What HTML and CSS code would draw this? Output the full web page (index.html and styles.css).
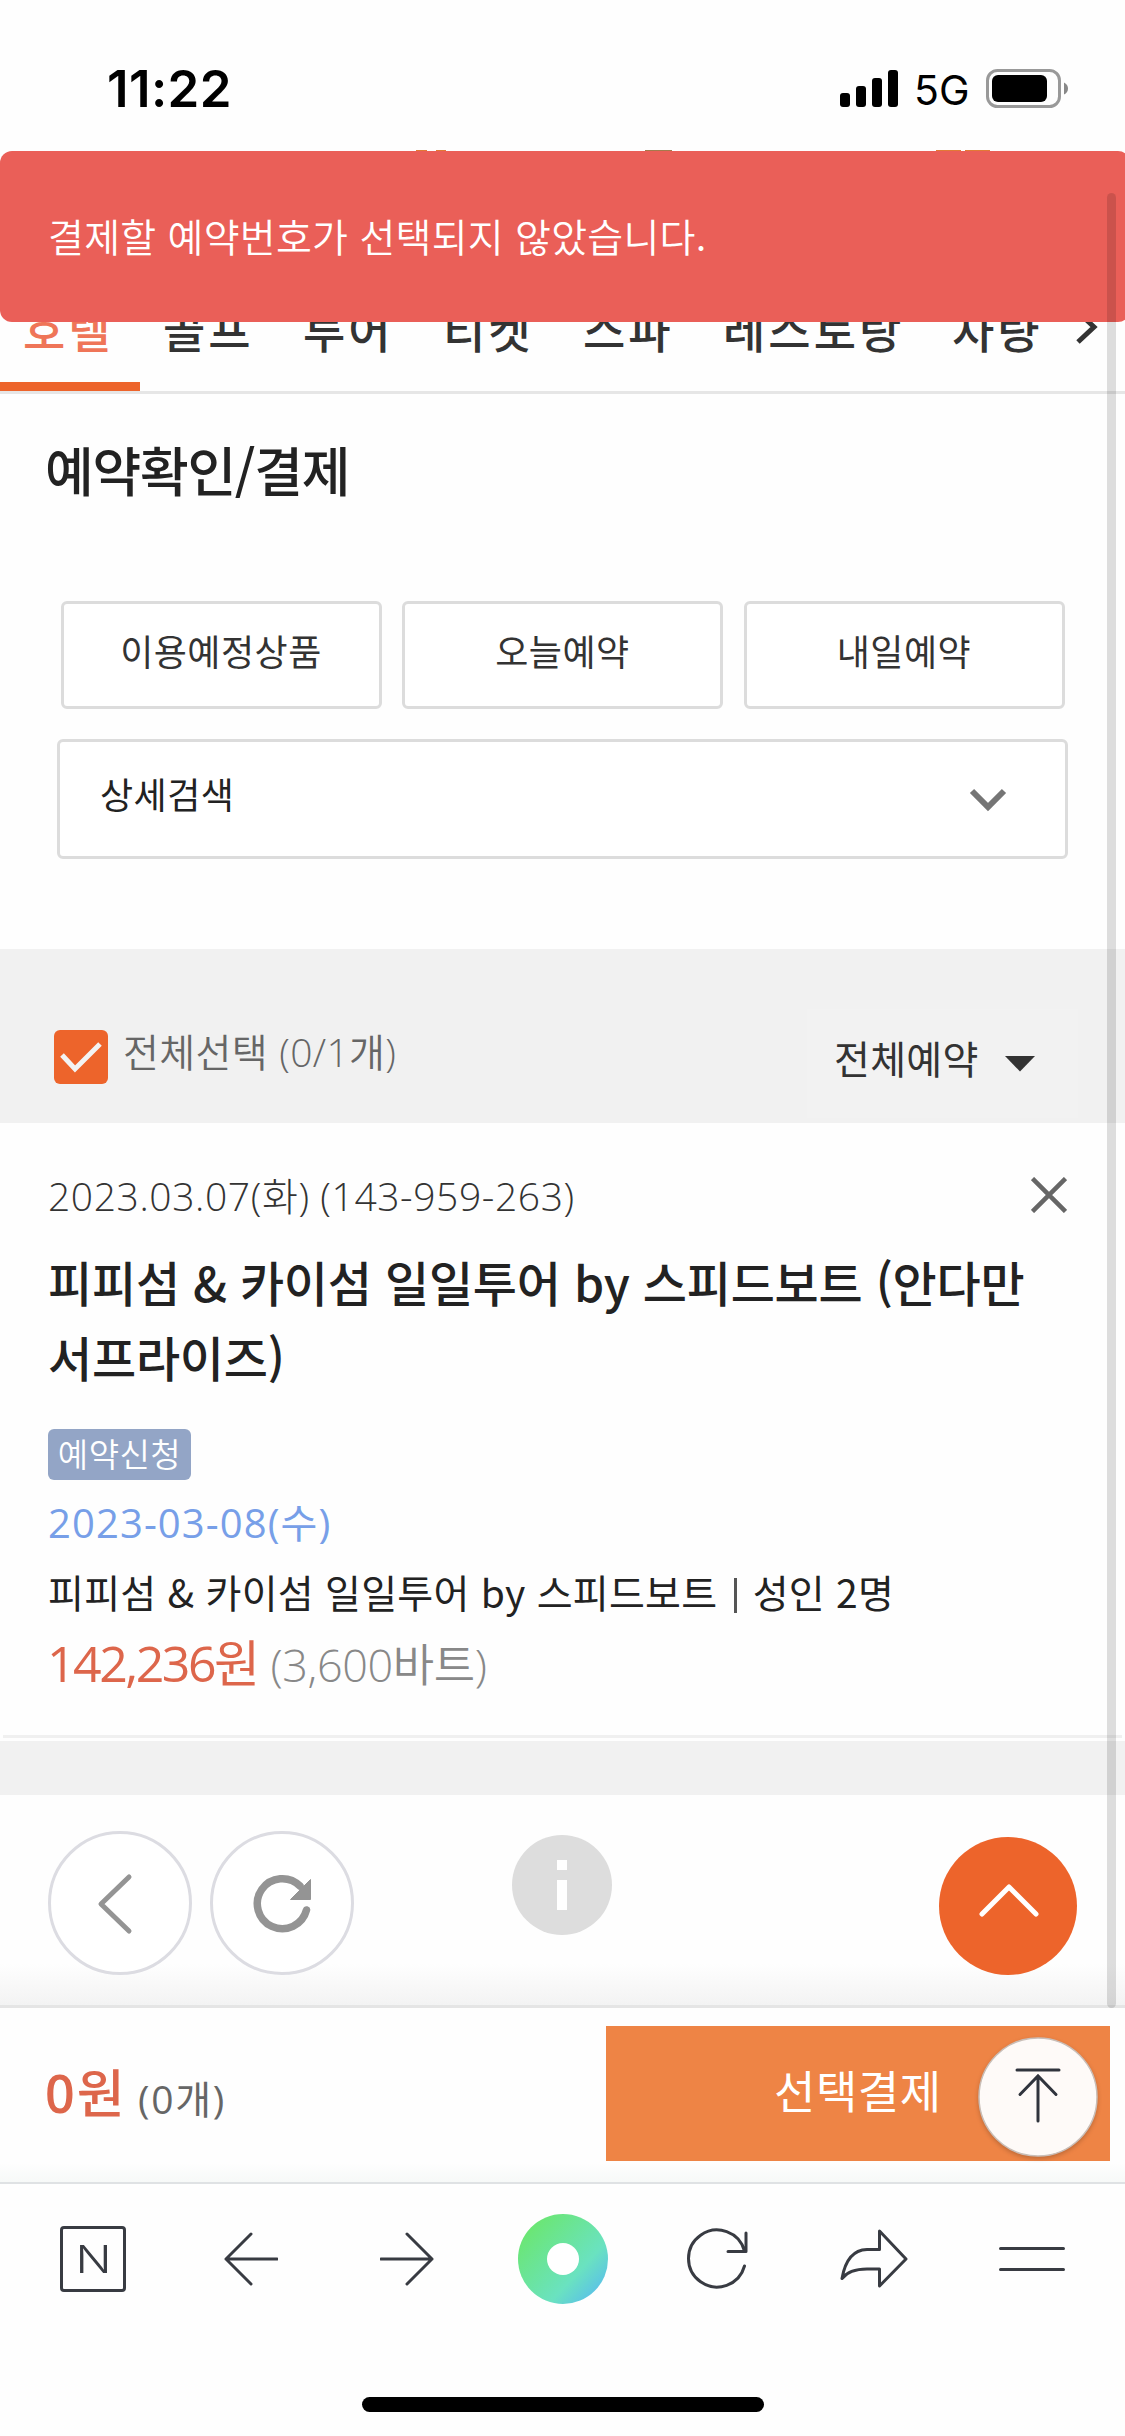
FILE: index.html
```html
<!DOCTYPE html>
<html lang="ko">
<head>
<meta charset="utf-8">
<title>예약확인/결제</title>
<link rel="stylesheet" href="styles.css">
</head>
<body>
<div class="screen">
  <header class="status">
    <span class="time">11:22</span>
    <div class="status-right">
      <svg width="58" height="38" viewBox="0 0 58 38"><rect x="0" y="23" width="10" height="14" rx="3"/><rect x="16" y="16" width="10" height="21" rx="3"/><rect x="32" y="8" width="10" height="29" rx="3"/><rect x="48" y="0" width="10" height="37" rx="3"/></svg>
      <span class="net">5G</span>
      <svg width="83" height="40" viewBox="0 0 83 40"><rect x="1.5" y="1.5" width="72" height="36" rx="10" fill="none" stroke="#999" stroke-width="3"/><rect x="6" y="6" width="55" height="27" rx="6"/><path d="M78 13.500q4 2 4 6t-4 6z" fill="#888"/></svg>
    </div>
    <i class="peek peek-a"></i><i class="peek peek-b"></i><i class="peek peek-c"></i><i class="peek peek-d"></i><i class="peek peek-e"></i>
  </header>

  <div class="top">
    <div class="toast" role="alert"><span class="t-toast">결제할 예약번호가 선택되지 않았습니다.</span></div>
    <nav class="tabs">
      <a class="tab active">호텔</a><a class="tab">골프</a><a class="tab">투어</a><a class="tab">티켓</a><a class="tab">스파</a><a class="tab wide">레스토랑</a><a class="tab last">차량</a>
      <svg class="tabs-next" width="24" height="34" viewBox="0 0 24 34"><path d="M3 2l16 15L3 32" fill="none" stroke="#333" stroke-width="5"/></svg>
    </nav>
  </div>

  <main>
    <h1 class="heading">예약확인/결제</h1>
    <div class="quick">
      <button class="quick-btn">이용예정상품</button>
      <button class="quick-btn">오늘예약</button>
      <button class="quick-btn">내일예약</button>
    </div>
    <div class="detail-search">
      <span>상세검색</span>
      <svg width="38" height="24" viewBox="0 0 38 24"><path d="M3 3l16 16L35 3" fill="none" stroke="#757575" stroke-width="6"/></svg>
    </div>

    <section class="filter">
      <span class="check"><svg width="54" height="54" viewBox="0 0 54 54"><path d="M8 25l13 14L46 14" fill="none" stroke="#f3f3f3" stroke-width="5"/></svg></span>
      <span class="select-all">전체선택 <span class="lat">(0/1</span>개<span class="lat">)</span></span>
      <div class="kind"><span>전체예약</span><svg width="30" height="16" viewBox="0 0 30 16"><path d="M0 0h30L15 15.500z" fill="#333"/></svg></div>
    </section>

    <article class="booking">
      <div class="book-top">
        <span class="book-no"><span class="lat">2023.03.07(</span>화<span class="lat">)&nbsp;(143-959-263)</span></span>
        <svg width="36" height="36" viewBox="0 0 36 36"><path d="M1.500 1.500l33 33M34.500 1.500l-33 33" stroke="#666" stroke-width="4.500"/></svg>
      </div>
      <h2 class="book-title">피피섬 &amp; 카이섬 일일투어 by 스피드보트 (안다만<br>서프라이즈)</h2>
      <span class="badge">예약신청</span>
      <p class="book-date"><span class="lat">2023-03-08(</span>수<span class="lat">)</span></p>
      <p class="book-item">피피섬 &amp; 카이섬 일일투어 by 스피드보트 <i class="bar"></i> 성인 2명</p>
      <p class="book-price"><span class="won"><span class="lat">142,236</span>원</span><span class="baht"><span class="lat">(3,600</span>바트<span class="lat">)</span></span></p>
    </article>
    <div class="rule"></div>
    <div class="band"></div>

    <div class="floating">
      <button class="round"><svg width="144" height="144" viewBox="0 0 144 144"><path d="M81 46L53 73l28 27" fill="none" stroke="#949494" stroke-width="5" stroke-linecap="round" stroke-linejoin="round"/></svg></button>
      <button class="round second"><svg width="144" height="144" viewBox="0 0 144 144"><path d="M96.500 79A25 25 0 1 1 90 55" fill="none" stroke="#949494" stroke-width="7.500" stroke-linecap="round"/><path d="M100.500 48.500v20H80.500z" fill="#949494" stroke="#949494" stroke-linejoin="round"/></svg></button>
      <svg class="info" width="100" height="100" viewBox="0 0 100 100"><circle cx="50" cy="50" r="50" fill="#ddd"/><path d="M45 25h10v10H45zM45 45h10v30H45z" fill="#fff"/></svg>
      <svg class="to-top" width="138" height="138" viewBox="0 0 138 138"><circle cx="69" cy="69" r="69" fill="#ed642b"/><path d="M43 77l27-27 27 27" fill="none" stroke="#fff" stroke-width="5" stroke-linecap="round" stroke-linejoin="round"/></svg>
    </div>
  </main>

  <footer class="pay">
    <span class="sum"><span class="lat">0</span>원</span><span class="count"><span class="lat">(0</span>개<span class="lat">)</span></span>
    <button class="pay-btn"><span>선택결제</span>
      <svg class="jump" width="120" height="120" viewBox="0 0 120 120"><circle cx="60" cy="60" r="59" fill="#fefaf8" stroke="#c9beb8" stroke-width="1.500"/><path d="M39 33h42M60 84V39M42 57.500L60 39l18 18.500" fill="none" stroke="#30343d" stroke-width="3" stroke-linecap="round"/></svg>
    </button>
  </footer>

  <nav class="browser">
    <span class="naver"><span>N</span></span>
    <svg class="i-back" width="54" height="54" viewBox="0 0 54 54"><path d="M27 2L2 27l25 25M2 27h51" /></svg>
    <svg class="i-fwd" width="54" height="54" viewBox="0 0 54 54"><path d="M27 2l25 25-25 25M52 27H1"/></svg>
    <svg class="i-home" width="90" height="90" viewBox="0 0 90 90"><defs><linearGradient id="g" x1=".15" y1=".15" x2=".9" y2=".85"><stop offset="0" stop-color="#6be675"/><stop offset=".7" stop-color="#6ae2c0"/><stop offset="1" stop-color="#5bc3e6"/></linearGradient></defs><circle cx="45" cy="45" r="45" fill="url(#g)"/><circle cx="45" cy="45" r="16" fill="#fff"/></svg>
    <svg class="i-reload" width="64" height="64" viewBox="0 0 64 64"><path d="M58.500 39A28.500 28.500 0 1 1 58.500 24M60 6v18.500H42"/></svg>
    <svg class="i-share" width="68" height="62" viewBox="0 0 68 62"><path d="M39.500 3L66 31 39.500 58V41H27Q9 41 2 50.500 7 22 27 21.500h12.500z"/></svg>
    <svg class="i-menu" width="66" height="26" viewBox="0 0 66 26"><path d="M1.500 2.500h63M1.500 23.500h63"/></svg>
  </nav>
  <div class="home-indicator"></div>
  <div class="scrollbar"></div>
</div>
</body>
</html>
```
FILE: styles.css
```css
* { box-sizing: border-box; margin: 0; padding: 0; }
body { width: 1125px; background: #fff; }
svg { display: block; flex: none; }
button { font: inherit; color: inherit; border: 0; background: none; }
.screen {
  position: relative; width: 1125px; height: 2436px; overflow: hidden;
  display: flex; flex-direction: column; background: #fefefe; color: #222;
  font-family: "Noto Sans CJK KR", sans-serif; font-size: 39px; line-height: 1; white-space: nowrap;
}
.lat { font-family: "Open Sans", "Noto Sans CJK KR", sans-serif; }

.status { position: relative; height: 151px; flex: none; display: flex; justify-content: space-between; padding: 0 56px 0 107px; font-family: Inter, sans-serif; color: #000; }
.time { font-size: 51px; font-weight: 600; line-height: 60px; padding-top: 59px; letter-spacing: .400px; }
.status-right { display: flex; align-items: flex-start; padding-top: 70px; }
.net { font-size: 41px; line-height: 50px; margin: -5px 18px 0 16px; width: 54px; }
.status-right svg:last-child { margin-top: -1px; }
.peek { position: absolute; top: 150px; height: 2px; background: #e27a35; }
.peek-a { left: 416px; width: 11px; } .peek-b { left: 436px; width: 10px; }
.peek-c { left: 645px; width: 27px; background: #a57a4c; }
.peek-d { left: 936px; width: 25px; } .peek-e { left: 965px; width: 25px; }

.top { position: relative; height: 243px; flex: none; }
.toast { position: absolute; inset: 0 -5px auto 0; height: 171px; z-index: 1; border-radius: 12px; background: #ea5f58; color: #fff; display: flex; align-items: center; padding: 0 0 3px 48px; font-weight: 350; letter-spacing: .25px; }
.tabs { height: 243px; border-bottom: 3px solid #e6e6e6; display: flex; align-items: flex-end; font-size: 46px; font-weight: 500; letter-spacing: 3px; color: #333; }
.tab { width: 140px; height: 94px; padding-left: 23px; line-height: 62px; border-bottom: 9px solid transparent; flex: none; }
.tab.active { color: #ef7558; border-color: #ed642b; }
.tab.wide { width: 230px; }
.tab.last { width: 145px; padding-left: 22px; }
.tabs-next { margin-bottom: 47px; }

main { height: 1611px; flex: none; background: linear-gradient(#fefefe 1570px, #f3f3f3 1611px); display: flex; flex-direction: column; }
.heading { font-size: 53px; font-weight: 500; line-height: 80px; letter-spacing: -1.300px; padding: 35px 0 0 45px; height: 207px; }
.quick { display: grid; grid-template-columns: repeat(3, 321px); gap: 20.500px; padding-left: 60.500px; }
.quick-btn { height: 108px; border: 3px solid #dcdcdc; border-radius: 6px; font-size: 36px; letter-spacing: .500px; color: #333; line-height: 92px; padding-bottom: 10px; background: #fff; }
.detail-search { margin: 30px 57px 0; height: 120px; border: 3px solid #dcdcdc; border-radius: 6px; display: flex; align-items: center; justify-content: space-between; padding: 0 58px 12px 40px; font-size: 36px; letter-spacing: .500px; background: #fff; }
.detail-search svg { margin-top: 13px; }
.filter { margin-top: 90px; height: 174px; flex: none; background: #f1f1f1; display: flex; padding-left: 54px; }
.check { margin: 81px 15px 0 0; width: 54px; height: 54px; border-radius: 6px; background: #ed642b; }
.select-all { width: 684px; padding-top: 82px; font-weight: 350; color: #666; letter-spacing: .350px; }
.kind { margin-top: 60px; width: 271px; height: 109px; background: #f2f2f2; display: flex; align-items: center; gap: 26px; padding: 0 0 12px 27px; letter-spacing: .300px; color: #333; }
.kind svg { margin-top: 12px; }

.booking { height: 612px; flex: none; padding: 41px 57px 0 48px; display: flex; flex-direction: column; align-items: flex-start; }
.book-top { width: 100%; height: 83px; display: flex; justify-content: space-between; }
.book-top svg { margin: 13px 1px 0 0; }
.book-no { font-weight: 300; color: #333; line-height: 60px; letter-spacing: .600px; }
.book-title { font-size: 48px; font-weight: 500; line-height: 75px; height: 182px; margin-top: -7px; padding-top: 4px; letter-spacing: -.220px; }
.badge { margin-top: 7px; width: 143px; height: 51px; border-radius: 6px; background: #93a5c6; color: #fff; font-size: 33px; font-weight: 350; letter-spacing: .500px; line-height: 49px; text-align: center; }
.book-date { color: #779fe8; font-size: 40px; line-height: 60px; margin-top: 11px; letter-spacing: 1.100px; }
.book-item { line-height: 60px; margin-top: 8px; letter-spacing: .250px; }
.bar { display: inline-block; width: 3px; height: 35px; margin: 0 5px; background: #555; vertical-align: -5px; }
.book-price { display: flex; align-items: baseline; line-height: 70px; margin-top: 4px; gap: 13px; }
.won { font-size: 50px; color: #dd664b; letter-spacing: -2.500px; margin-left: -1px; }
.baht { font-size: 45px; font-weight: 350; color: #888; letter-spacing: -.400px; }
.rule { height: 3px; margin: 0 3px; flex: none; background: #f0f0f0; }
.band { height: 54px; margin-top: 3px; flex: none; background: #f1f1f1; }
.floating { display: flex; align-items: flex-start; padding: 36px 0 0 48px; }
.round { width: 144px; height: 144px; border: 3px solid #dcdce2; border-radius: 50%; background: #fff; }
.round svg { margin: -3px; }
.second { margin-left: 18px; }
.info { margin: 4px 0 0 158px; }
.to-top { margin: 6px 0 0 327px; }

.pay { height: 177px; flex: none; border-top: 3px solid #e5e5e5; background: linear-gradient(#fefefe 155px, #f7f9f8 174px); display: flex; padding-left: 45px; }
.sum { width: 93px; font-size: 52px; font-weight: 500; color: #dd664b; line-height: 70px; padding-top: 48px; letter-spacing: .500px; }
.sum .lat { font-weight: 600; letter-spacing: 2px; }
.count { color: #666; line-height: 60px; padding-top: 59px; width: 468px; letter-spacing: 1.700px; }
.pay-btn { margin-top: 18px; width: 504px; height: 135px; background: #ee8445; color: #fff; font-size: 45px; font-weight: 400; letter-spacing: .500px; display: flex; align-items: flex-start; padding: 11px 12px 0 168px; line-height: 106px; justify-content: space-between; }
.jump { filter: drop-shadow(0 2px 2px rgba(0,0,0,.2)); }

.browser { height: 213px; flex: none; border-top: 2px solid #dfe2e4; background: #fefefe; display: flex; align-items: flex-start; padding: 0 0 0 60px; }
.browser path { fill: none; stroke: #383b42; stroke-width: 3; stroke-linejoin: round; stroke-linecap: round; }
.naver { margin-top: 42px; width: 66px; height: 66px; border: 3px solid #383b42; border-radius: 4px; font: 300 38px/60px Inter, sans-serif; color: #383b42; text-align: center; }
.naver span { display: inline-block; transform: scaleX(1.25); }
.i-back { margin: 48px 0 0 98px; }
.i-fwd { margin: 48px 0 0 102px; }
.i-home { margin: 30px 0 0 84px; }
.i-reload { margin: 43px 0 0 78px; }
.i-share { margin: 44px 0 0 90px; }
.i-menu { margin: 62px 0 0 91px; }
.home-indicator { width: 402px; height: 15px; margin: 2px 0 0 362px; border-radius: 8px; background: #000; }
.scrollbar { position: absolute; left: 1107px; top: 193px; width: 9px; height: 1815px; border-radius: 5px; background: rgba(0,0,0,.13); z-index: 2; }
```
